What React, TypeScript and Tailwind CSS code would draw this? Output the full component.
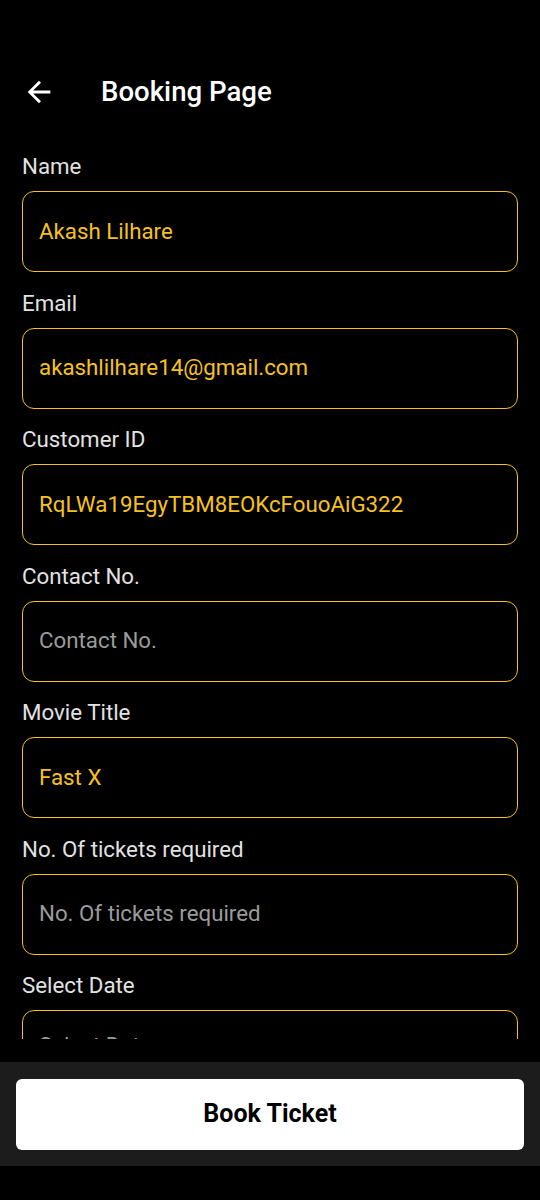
import { FC } from "react";

// フォームの各項目
const fields = [
  { label: "Name", value: "Akash Lilhare" },
  { label: "Email", value: "akashlilhare14@gmail.com" },
  { label: "Customer ID", value: "RqLWa19EgyTBM8EOKcFouoAiG322" },
  { label: "Contact No.", value: "" },
  { label: "Movie Title", value: "Fast X" },
  { label: "No. Of tickets required", value: "" },
  { label: "Select Date", value: "", picker: true },
];

const font = `Roboto, 'Noto Sans', sans-serif`;

const Field: FC<{ label: string; value: string; picker?: boolean }> = ({ label, value, picker }) => (
  <div className="flex flex-col mb-[16.5px]">
    <div className="text-[22.3px] leading-[28px] text-[#e2e2e2]">{label}</div>
    <div
      className={`mt-[11px] h-[81px] rounded-[12px] border border-[#f7c21e] flex items-center px-4 ${
        picker ? "pb-[10px]" : ""
      }`}
    >
      {value ? (
        <span className="text-[22.3px] text-[#f7c21e]">{value}</span>
      ) : (
        <span className="text-[22.3px] text-[#9b9b9b]">{label}</span>
      )}
    </div>
  </div>
);

const App: FC = () => {
  return (
    <div className="w-[540px] h-[1200px] bg-black flex flex-col" style={{ fontFamily: font }}>
      {/* スクロールする部分 */}
      <div className="h-[1039px] overflow-hidden flex flex-col">
        <div className="pt-16 h-[120px] flex items-center px-[22px] shrink-0">
          <svg width="34" height="34" viewBox="0 0 24 24" fill="#fff">
            <path d="M20 11H7.83l5.59-5.59L12 4l-8 8 8 8 1.41-1.41L7.83 13H20v-2z" />
          </svg>
          <h1 className="ml-[45px] text-[27.6px] font-medium text-white">Booking Page</h1>
        </div>
        <div className="pt-8 px-[22px] flex flex-col shrink-0">
          {fields.map((f) => (
            <Field key={f.label} label={f.label} value={f.value} picker={f.picker} />
          ))}
        </div>
      </div>
      <div className="h-[23px] bg-black" />
      {/* 下部のボタン */}
      <div className="h-[104px] bg-[#1c1c1c] px-4 flex items-center">
        <button className="w-full h-[71px] bg-white rounded-[6px] text-[25px] font-bold text-black">
          Book Ticket
        </button>
      </div>
      <div className="flex-1 bg-black" />
    </div>
  );
};

export default App;
